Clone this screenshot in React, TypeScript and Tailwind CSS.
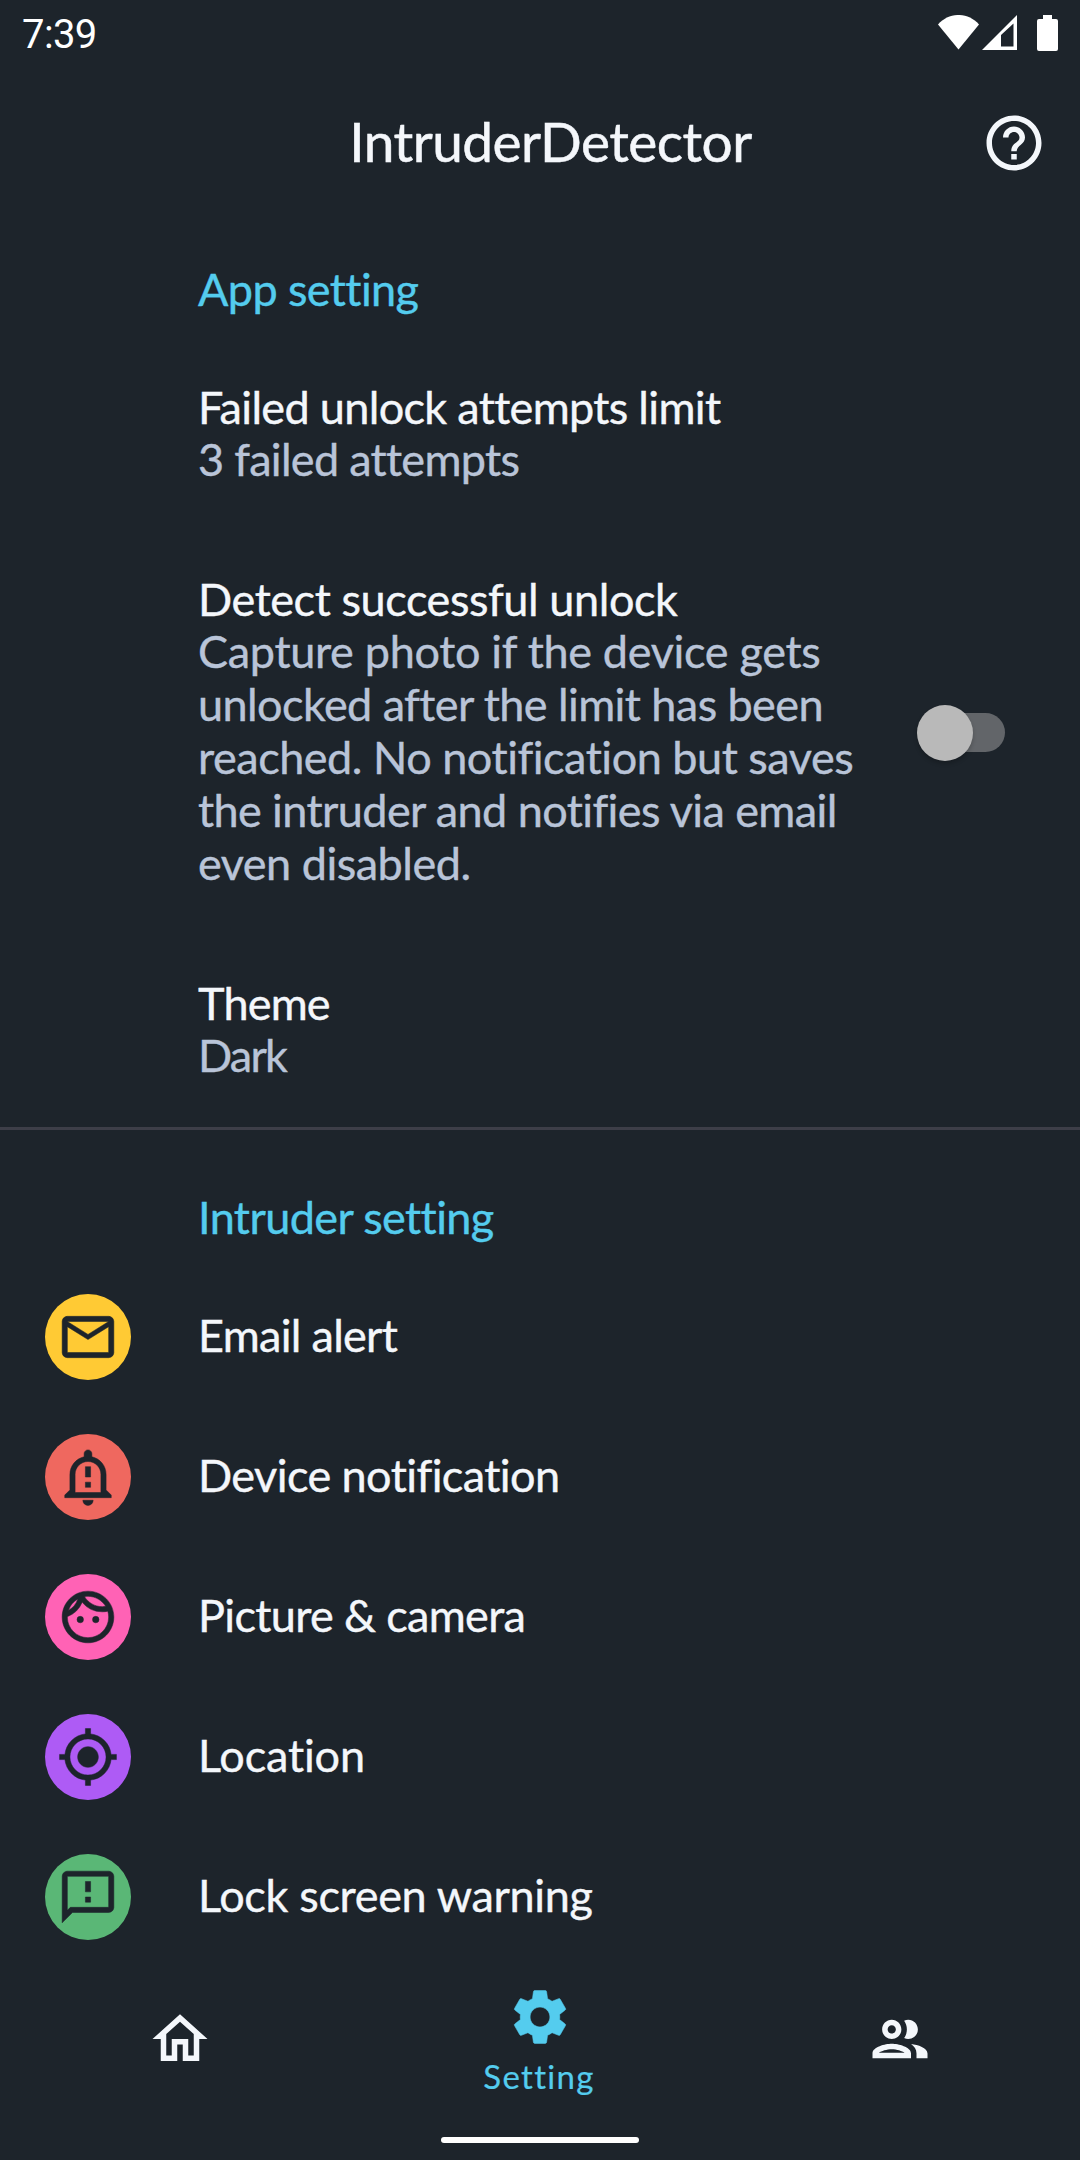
import type { IconType } from "react-icons";
import {
  MdOutlineEmail,
  MdOutlineFace,
  MdOutlineFeedback,
  MdOutlineGroup,
  MdOutlineHelpOutline,
  MdOutlineHome,
  MdOutlineMyLocation,
  MdOutlineNotificationImportant,
  MdSettings,
} from "react-icons/md";

type Line = { text: string; tracking: string };

const detectSummary: Line[] = [
  { text: "Capture photo if the device gets", tracking: "tracking-[-0.32px]" },
  { text: "unlocked after the limit has been", tracking: "tracking-[-0.58px]" },
  { text: "reached. No notification but saves", tracking: "tracking-[-0.48px]" },
  { text: "the intruder and notifies via email", tracking: "tracking-[-0.6px]" },
  { text: "even disabled.", tracking: "tracking-[-0.5px]" },
];

const intruderItems: { label: string; color: string; tracking: string; Icon: IconType }[] = [
  { label: "Email alert", color: "bg-[#ffca34]", tracking: "tracking-[-0.7px]", Icon: MdOutlineEmail },
  { label: "Device notification", color: "bg-[#ef685f]", tracking: "tracking-[-0.57px]", Icon: MdOutlineNotificationImportant },
  { label: "Picture & camera", color: "bg-[#ff62b5]", tracking: "tracking-[-0.65px]", Icon: MdOutlineFace },
  { label: "Location", color: "bg-[#ae5bf5]", tracking: "tracking-[-0.15px]", Icon: MdOutlineMyLocation },
  { label: "Lock screen warning", color: "bg-[#5ab776]", tracking: "tracking-[-0.32px]", Icon: MdOutlineFeedback },
];

function StatusBar() {
  return (
    <div className="flex h-[68px] items-start justify-between pl-[22px] pr-[22px]">
      <span className="mt-[11px] font-['Roboto',sans-serif] text-[40px] leading-[48px] tracking-[-0.6px] text-white [-webkit-text-stroke:0px]">7:39</span>
      <div className="mt-[15px] flex text-white">
        <svg className="h-[35px] w-[41px]" viewBox="0 0 41 35" fill="currentColor">
          <path d="M0 9.5C11-3.2 30-3.2 41 9.5L20.5 34.5Z" />
        </svg>
        <svg className="ml-[3px] h-[35px] w-[35px]" viewBox="0 0 35 35" fill="currentColor" fillRule="evenodd">
          <path d="M0 35L35 0V35ZM19 20V31.500H31.500V8.500Z" />
        </svg>
        <svg className="ml-[20px] h-[36px] w-[21px]" viewBox="0 0 21 36" fill="currentColor">
          <path d="M6 0H15V4H19Q21 4 21 6V34Q21 36 19 36H2Q0 36 0 34V6Q0 4 2 4H6Z" />
        </svg>
      </div>
    </div>
  );
}

function Header() {
  return (
    <header className="grid h-[150px] grid-cols-[1fr_auto_1fr] items-center pr-[33px]">
      <span />
      <h1 className="ml-[54px] pb-[4px] text-[55px] leading-[66px] tracking-[-0.53px] [-webkit-text-stroke:0.5px]">IntruderDetector</h1>
      <button className="justify-self-end">
        <MdOutlineHelpOutline className="size-[66px]" />
      </button>
    </header>
  );
}

function Toggle() {
  return (
    <div className="relative mr-[75px] mt-[2px] flex h-[56px] w-[88px] items-center justify-end">
      <div className="h-[39px] w-[76px] rounded-full bg-[#626569]" />
      <div className="absolute left-0 top-0 size-[56px] rounded-full bg-[#b9b9b9] shadow-[0_3px_4px_rgba(0,0,0,0.2)]" />
    </div>
  );
}

export default function App() {
  return (
    <div className="flex h-[2160px] w-[1080px] flex-col overflow-hidden bg-[#1d242b] font-['Lato',sans-serif] text-[45px] text-[#f4f7fb] [-webkit-text-stroke:0.4px]">
      <StatusBar />
      <Header />
      <main className="flex-1">
        <section className="pl-[198px]">
          <h2 className="pt-[44px] leading-[54px] tracking-[-0.6px] text-[#54ccee]">App setting</h2>

          <div className="mt-[65px]">
            <h3 className="leading-[52px] tracking-[-0.67px]">Failed unlock attempts limit</h3>
            <p className="leading-[53px] tracking-[-0.7px] text-[#b9c4d8]">3 failed attempts</p>
          </div>

          <div className="mt-[87px] flex items-center justify-between">
            <div>
              <h3 className="leading-[52px] tracking-[-0.42px]">Detect successful unlock</h3>
              <p className="leading-[53px] text-[#b9c4d8]">
                {detectSummary.map((line) => (
                  <span key={line.text} className={`block whitespace-nowrap ${line.tracking}`}>
                    {line.text}
                  </span>
                ))}
              </p>
            </div>
            <Toggle />
          </div>

          <div className="mt-[87px]">
            <h3 className="leading-[52px] tracking-[-0.8px]">Theme</h3>
            <p className="leading-[53px] tracking-[-1.8px] text-[#b9c4d8]">Dark</p>
          </div>
        </section>

        <hr className="mt-[45px] h-[3px] border-0 bg-[#3d3e48]" />

        <section className="pt-[60px]">
          <h2 className="pl-[198px] leading-[54px] tracking-[-0.6px] text-[#54ccee]">Intruder setting</h2>
          <ul className="mt-[23px]">
            {intruderItems.map(({ label, color, tracking, Icon }) => (
              <li key={label} className="flex h-[140px] items-center pl-[45px]">
                <span className={`flex size-[86px] items-center justify-center rounded-full text-[#1d242b] ${color}`}>
                  <Icon className="size-[62px] stroke-[0.2] [&>path[fill=none]]:stroke-none" />
                </span>
                <span className={`ml-[67px] pb-[4px] leading-[54px] ${tracking}`}>{label}</span>
              </li>
            ))}
          </ul>
        </section>
      </main>

      <nav className="grid h-[193px] grid-cols-3 justify-items-center">
        <MdOutlineHome className="mt-[39px] size-[66px]" />
        <div className="flex flex-col items-center text-[#54ccee]">
          <MdSettings className="mt-[17px] size-[66px] stroke-[0.2] [&>path[fill=none]]:stroke-none" />
          <span className="mr-[2px] mt-[6px] text-[33px] leading-[40px] tracking-[1.3px] [-webkit-text-stroke:0.2px]">Setting</span>
          <div className="mt-[41px] h-[6px] w-[198px] rounded-full bg-white" />
        </div>
        <MdOutlineGroup className="mt-[39px] size-[66px]" />
      </nav>
    </div>
  );
}
